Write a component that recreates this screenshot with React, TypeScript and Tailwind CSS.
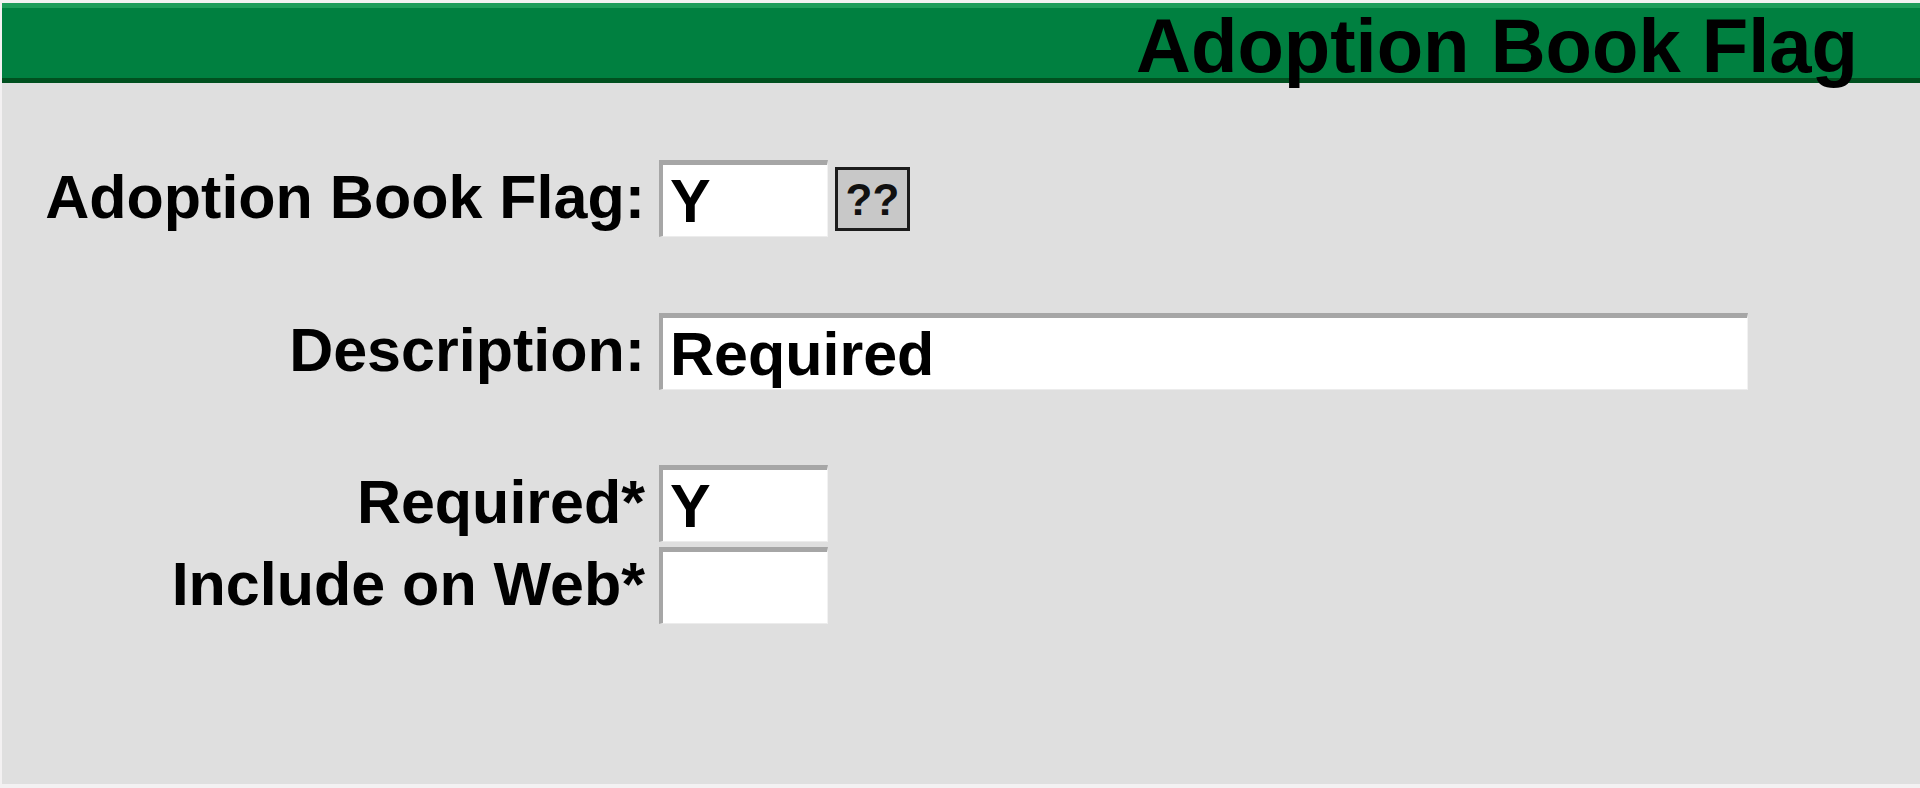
import React from "react";

type FieldProps = {
  label: string;
  value: string;
  width: string;
};

function Field({ label, value, width }: FieldProps) {
  return (
    <div className="flex items-start">
      <div className="w-[643px] shrink-0 pt-[7px] text-right text-[61px] font-bold leading-[61px] text-black">
        {label}
      </div>
      <input
        readOnly
        value={value}
        className={`ml-[14px] h-[77px] ${width} border-t-[5px] border-l-[4px] border-r-[1px] border-b-[1px] border-t-[#a6a6a6] border-l-[#a6a6a6] border-r-[#f2f2f2] border-b-[#ececec] bg-white px-[7px] py-0 text-[61px] font-bold leading-[61px] text-black outline-none`}
      />
    </div>
  );
}

export default function App() {
  return (
    <div className="h-[788px] w-full bg-[#f3f1f2] pl-[2px] pt-[3px] font-['Liberation_Sans',Arial,sans-serif]">
      <div className="h-[781px] w-full bg-[#dfdfdf]">
        {/* Title bar */}
        <div className="flex h-[80px] justify-end border-t-[5px] border-b-[5px] border-t-[#1e9c5a] border-b-[#00501f] bg-[#008040] pr-[62px]">
          <h1 className="text-[76px] font-bold leading-[76px] text-black">
            Adoption Book Flag
          </h1>
        </div>

        {/* Form */}
        <div className="pt-[77px]">
          <div className="flex items-start">
            <Field label="Adoption Book Flag:" value="Y" width="w-[169px]" />
            <button className="ml-[7px] mt-[7px] flex h-[64px] w-[75px] items-center justify-center border-[3px] border-[#1c1c1c] bg-[#c8c8c8] pt-[2px] text-[44px] font-bold leading-[44px] text-[#111]">
              ??
            </button>
          </div>

          <div className="mt-[76px]">
            <Field label="Description:" value="Required" width="w-[1089px]" />
          </div>

          <div className="mt-[75px]">
            <Field label="Required*" value="Y" width="w-[169px]" />
          </div>

          <div className="mt-[5px]">
            <Field label="Include on Web*" value="" width="w-[169px]" />
          </div>
        </div>
      </div>
    </div>
  );
}
